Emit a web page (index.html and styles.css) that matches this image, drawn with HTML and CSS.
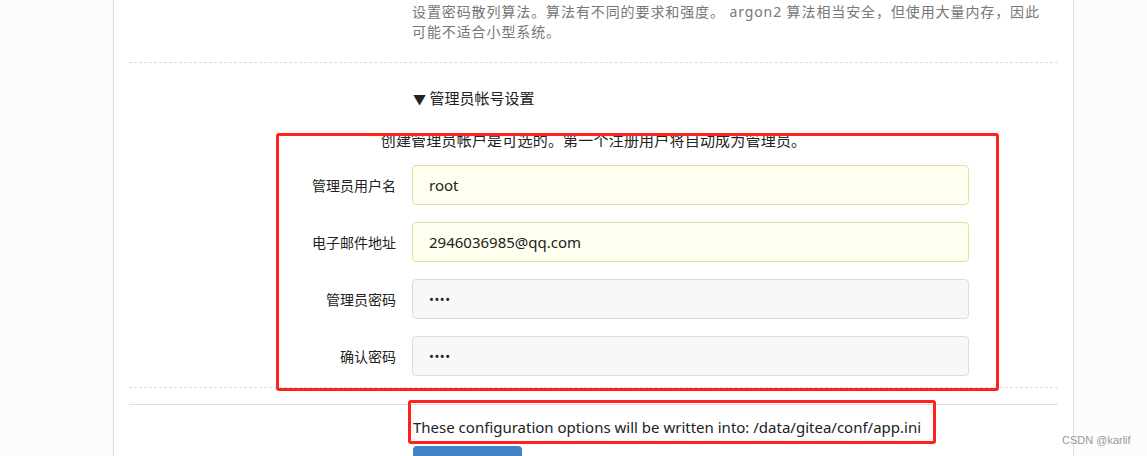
FILE: index.html
```html
<!DOCTYPE html>
<html lang="zh-CN">
<head>
    <meta charset="UTF-8">
    <meta name="viewport" content="width=device-width, initial-scale=1.0">
    <title>安装页面</title>
    <link rel="stylesheet" href="styles.css">
</head>

<body>
    <div class="page">
        <div class="form">
            <div class="field-help">
                设置密码散列算法。算法有不同的要求和强度。 argon2 算法相当安全，但使用大量内存，因此可能不适合小型系统。
            </div>

            <div class="divider dashed"></div>

            <details class="admin" open>
                <summary>管理员帐号设置</summary>
                <p class="note">创建管理员帐户是可选的。第一个注册用户将自动成为管理员。</p>

                <div class="row">
                    <label for="admin_name">管理员用户名</label>
                    <input type="text" id="admin_name" class="autofill" value="root">
                </div>
                <div class="row">
                    <label for="admin_email">电子邮件地址</label>
                    <input type="text" id="admin_email" class="autofill" value="2946036985@qq.com">
                </div>
                <div class="row">
                    <label for="admin_passwd">管理员密码</label>
                    <input type="password" id="admin_passwd" value="1234">
                </div>
                <div class="row">
                    <label for="admin_confirm">确认密码</label>
                    <input type="password" id="admin_confirm" value="1234">
                </div>
            </details>

            <div class="divider dashed last"></div>
            <div class="divider solid"></div>

            <p class="config-path">These configuration options will be written into: /data/gitea/conf/app.ini</p>
            <button class="install-btn" aria-label="立即安装"></button>
        </div>

        <!-- red annotation boxes -->
        <div class="mark mark-admin"></div>
        <div class="mark mark-path"></div>
    </div>

    <div class="watermark">CSDN @karlif</div>
</body>
</html>
```

FILE: styles.css
```css
* {
    margin: 0;
    padding: 0;
    box-sizing: border-box;
}

html,
body {
    height: 456px;
    overflow: hidden;
}

body {
    font-family: "Segoe UI", "Noto Sans", "Noto Sans CJK SC", sans-serif;
    background-color: #fcfcfc;
    color: #222;
    position: relative;
}

.page {
    position: relative;
    margin-left: 113px;
    width: 961px;
    height: 456px;
    overflow: hidden;
    background-color: #fff;
    border-left: 1px solid #ddd;
    border-right: 1px solid #ddd;
}

.form {
    padding: 2px 15px 0;
}

.field-help {
    margin-left: 283px;
    padding-right: 10px;
    font-size: 14px;
    line-height: 20px;
    letter-spacing: 0.9px;
    color: #777;
}

.divider {
    height: 1px;
}

.divider.dashed {
    margin-top: 20px;
    border-top: 1px dashed #ddd;
}

.divider.last {
    margin-top: 11px;
}

.divider.solid {
    margin-top: 16px;
    border-top: 1px solid #ddd;
}

.admin summary {
    margin: 24px 0 0 284px;
    font-size: 15px;
    line-height: 22px;
    list-style: none;
    cursor: pointer;
}

.admin summary::before {
    content: "▼ ";
    font-size: 13px;
}

.note {
    margin-top: 20px;
    text-align: center;
    font-size: 15px;
    line-height: 20px;
    letter-spacing: 0.2px;
}

.row {
    display: grid;
    grid-template-columns: 267px 557px;
    column-gap: 16px;
    align-items: center;
    margin-top: 17px;
}

.note + .row {
    margin-top: 15px;
}

.row label {
    text-align: right;
    font-size: 14px;
    color: #222;
}

.row input {
    height: 40px;
    padding: 0 16px;
    font-family: inherit;
    font-size: 15px;
    color: #222;
    background-color: #f8f8f8;
    border: 1px solid #ddd;
    border-radius: 4px;
    outline: none;
}

.row input.autofill {
    background-color: #fffff0;
    border-color: #e6dea0;
}

.row input[type="password"] {
    font-size: 13px;
    letter-spacing: 0.5px;
}

.config-path {
    margin: 12px 0 0 284px;
    font-size: 15px;
    line-height: 20px;
}

.install-btn {
    display: block;
    margin: 9px 0 0 284px;
    width: 109px;
    height: 38px;
    border: none;
    border-radius: 4px;
    background-color: #4183c4;
}

.mark {
    position: absolute;
    border: 3px solid #ff2218;
    border-radius: 3px;
}

.mark-admin {
    left: 162px;
    top: 133px;
    width: 723px;
    height: 258px;
}

.mark-path {
    left: 294px;
    top: 400px;
    width: 528px;
    height: 44px;
}

.watermark {
    position: absolute;
    left: 1062px;
    top: 434px;
    font-family: "Liberation Sans", sans-serif;
    font-size: 11px;
    color: #999;
}
```
